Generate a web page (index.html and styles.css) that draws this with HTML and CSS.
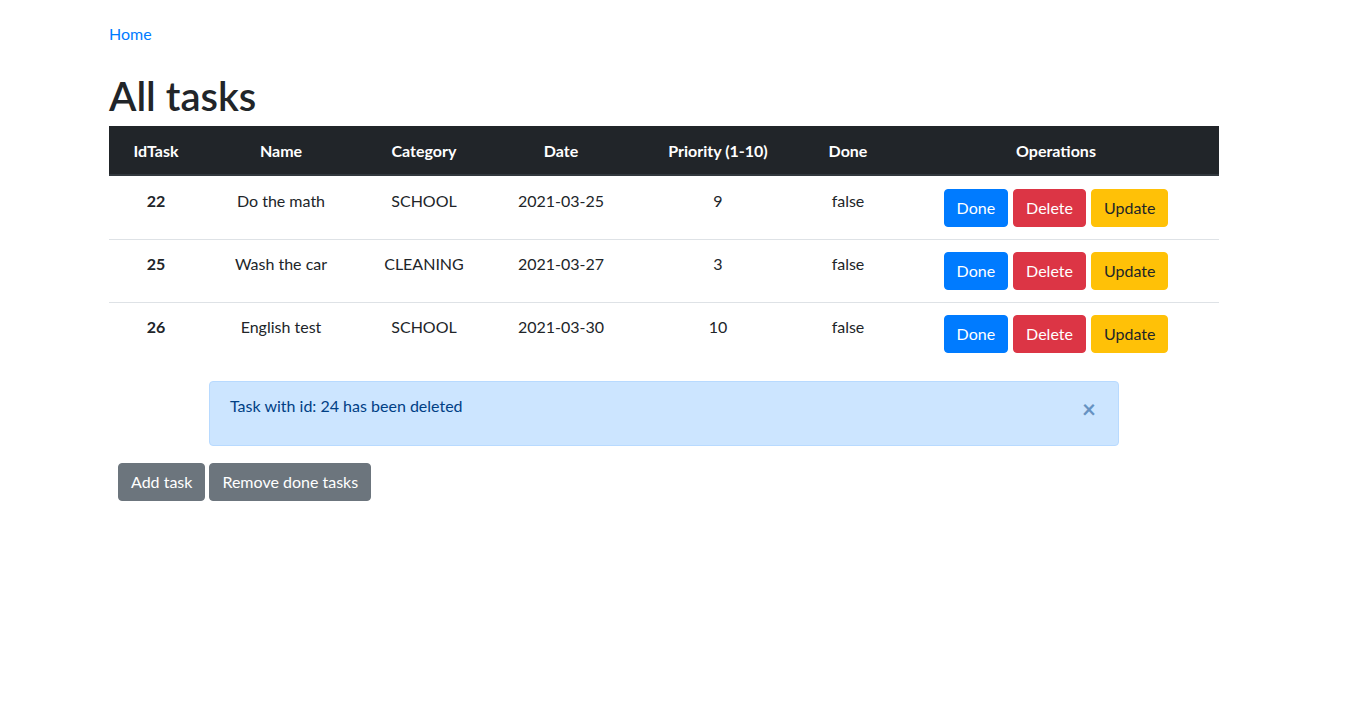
FILE: index.html
```html
<!DOCTYPE html>
<html lang="en">
<head>
<meta charset="utf-8">
<title>All tasks</title>
<link rel="stylesheet" href="styles.css">
</head>
<body>
<div class="container">
  <a class="home-link" href="#">Home</a>
  <h1 class="title">All tasks</h1>
  <table class="tasks">
    <colgroup>
      <col class="c-id"><col class="c-name"><col class="c-cat"><col class="c-date"><col class="c-prio"><col class="c-done"><col class="c-ops">
    </colgroup>
    <thead>
      <tr><th>IdTask</th><th>Name</th><th>Category</th><th>Date</th><th>Priority (1-10)</th><th>Done</th><th>Operations</th></tr>
    </thead>
    <tbody>
      <tr><th>22</th><td>Do the math</td><td>SCHOOL</td><td>2021-03-25</td><td>9</td><td>false</td>
        <td><div class="ops"><button class="btn btn-primary">Done</button><button class="btn btn-danger">Delete</button><button class="btn btn-warning">Update</button></div></td></tr>
      <tr><th>25</th><td>Wash the car</td><td>CLEANING</td><td>2021-03-27</td><td>3</td><td>false</td>
        <td><div class="ops"><button class="btn btn-primary">Done</button><button class="btn btn-danger">Delete</button><button class="btn btn-warning">Update</button></div></td></tr>
      <tr><th>26</th><td>English test</td><td>SCHOOL</td><td>2021-03-30</td><td>10</td><td>false</td>
        <td><div class="ops"><button class="btn btn-primary">Done</button><button class="btn btn-danger">Delete</button><button class="btn btn-warning">Update</button></div></td></tr>
    </tbody>
  </table>
  <div class="alert">
    <span>Task with id: 24 has been deleted</span>
    <button class="close" aria-label="Close">&times;</button>
  </div>
  <div class="actions">
    <button class="btn btn-secondary">Add task</button><button class="btn btn-secondary">Remove done tasks</button>
  </div>
</div>
</body>
</html>
```
FILE: styles.css
```css
* { box-sizing: border-box; }
html, body { margin: 0; padding: 0; }
body {
  font-family: Lato, "Liberation Sans", sans-serif;
  font-size: 16px;
  line-height: 24px;
  color: #212529;
  background: #fff;
}
.container {
  width: 1110px;
  margin-left: 109px;
  padding-top: 22px;
}
.home-link {
  display: block;
  color: #007bff;
  text-decoration: none;
}
.title {
  font-size: 40px;
  font-weight: 600;
  line-height: 48px;
  margin: 26px 0 6px;
}
.tasks {
  width: 1110px;
  table-layout: fixed;
  border-collapse: collapse;
  margin-bottom: 16px;
}
.c-id { width: 94px; }
.c-name { width: 156px; }
.c-cat { width: 130px; }
.c-date { width: 144px; }
.c-prio { width: 170px; }
.c-done { width: 90px; }
.c-ops { width: 326px; }
.tasks th, .tasks td {
  padding: 12px;
  text-align: center;
  vertical-align: top;
  border-top: 1px solid #dee2e6;
}
.tasks thead th {
  background: #212529;
  color: #fff;
  font-weight: 700;
  border-top: 0;
  border-bottom: 2px solid #32383e;
  vertical-align: bottom;
  padding: 13px 12px 11px;
}
.tasks tbody tr:first-child th, .tasks tbody tr:first-child td {
  border-top: 0;
  padding-top: 13px;
}
.tasks tbody th { font-weight: 700; }
.ops {
  display: flex;
  justify-content: center;
  gap: 5px;
}
.btn {
  font-family: inherit;
  font-size: 16px;
  line-height: 24px;
  padding: 6px 12px;
  border: 1px solid transparent;
  border-radius: 4px;
  cursor: pointer;
}
.btn-primary { background: #007bff; border-color: #007bff; color: #fff; }
.btn-danger { background: #dc3545; border-color: #dc3545; color: #fff; }
.btn-warning { background: #ffc107; border-color: #ffc107; color: #212529; }
.btn-secondary { background: #6c757d; border-color: #6c757d; color: #fff; }
.alert {
  position: relative;
  width: 910px;
  margin: 0 auto 17px;
  padding: 12px 64px 27px 20px;
  background: #cce5ff;
  border: 1px solid #b8daff;
  border-radius: 4px;
  color: #004085;
}
.close {
  position: absolute;
  top: 3px;
  right: 2px;
  padding: 12px 20px;
  background: transparent;
  border: 0;
  font-family: inherit;
  font-size: 24px;
  font-weight: 700;
  line-height: 24px;
  color: #6692c2;
}
.actions {
  display: flex;
  gap: 4px;
  padding-left: 9px;
}
```
